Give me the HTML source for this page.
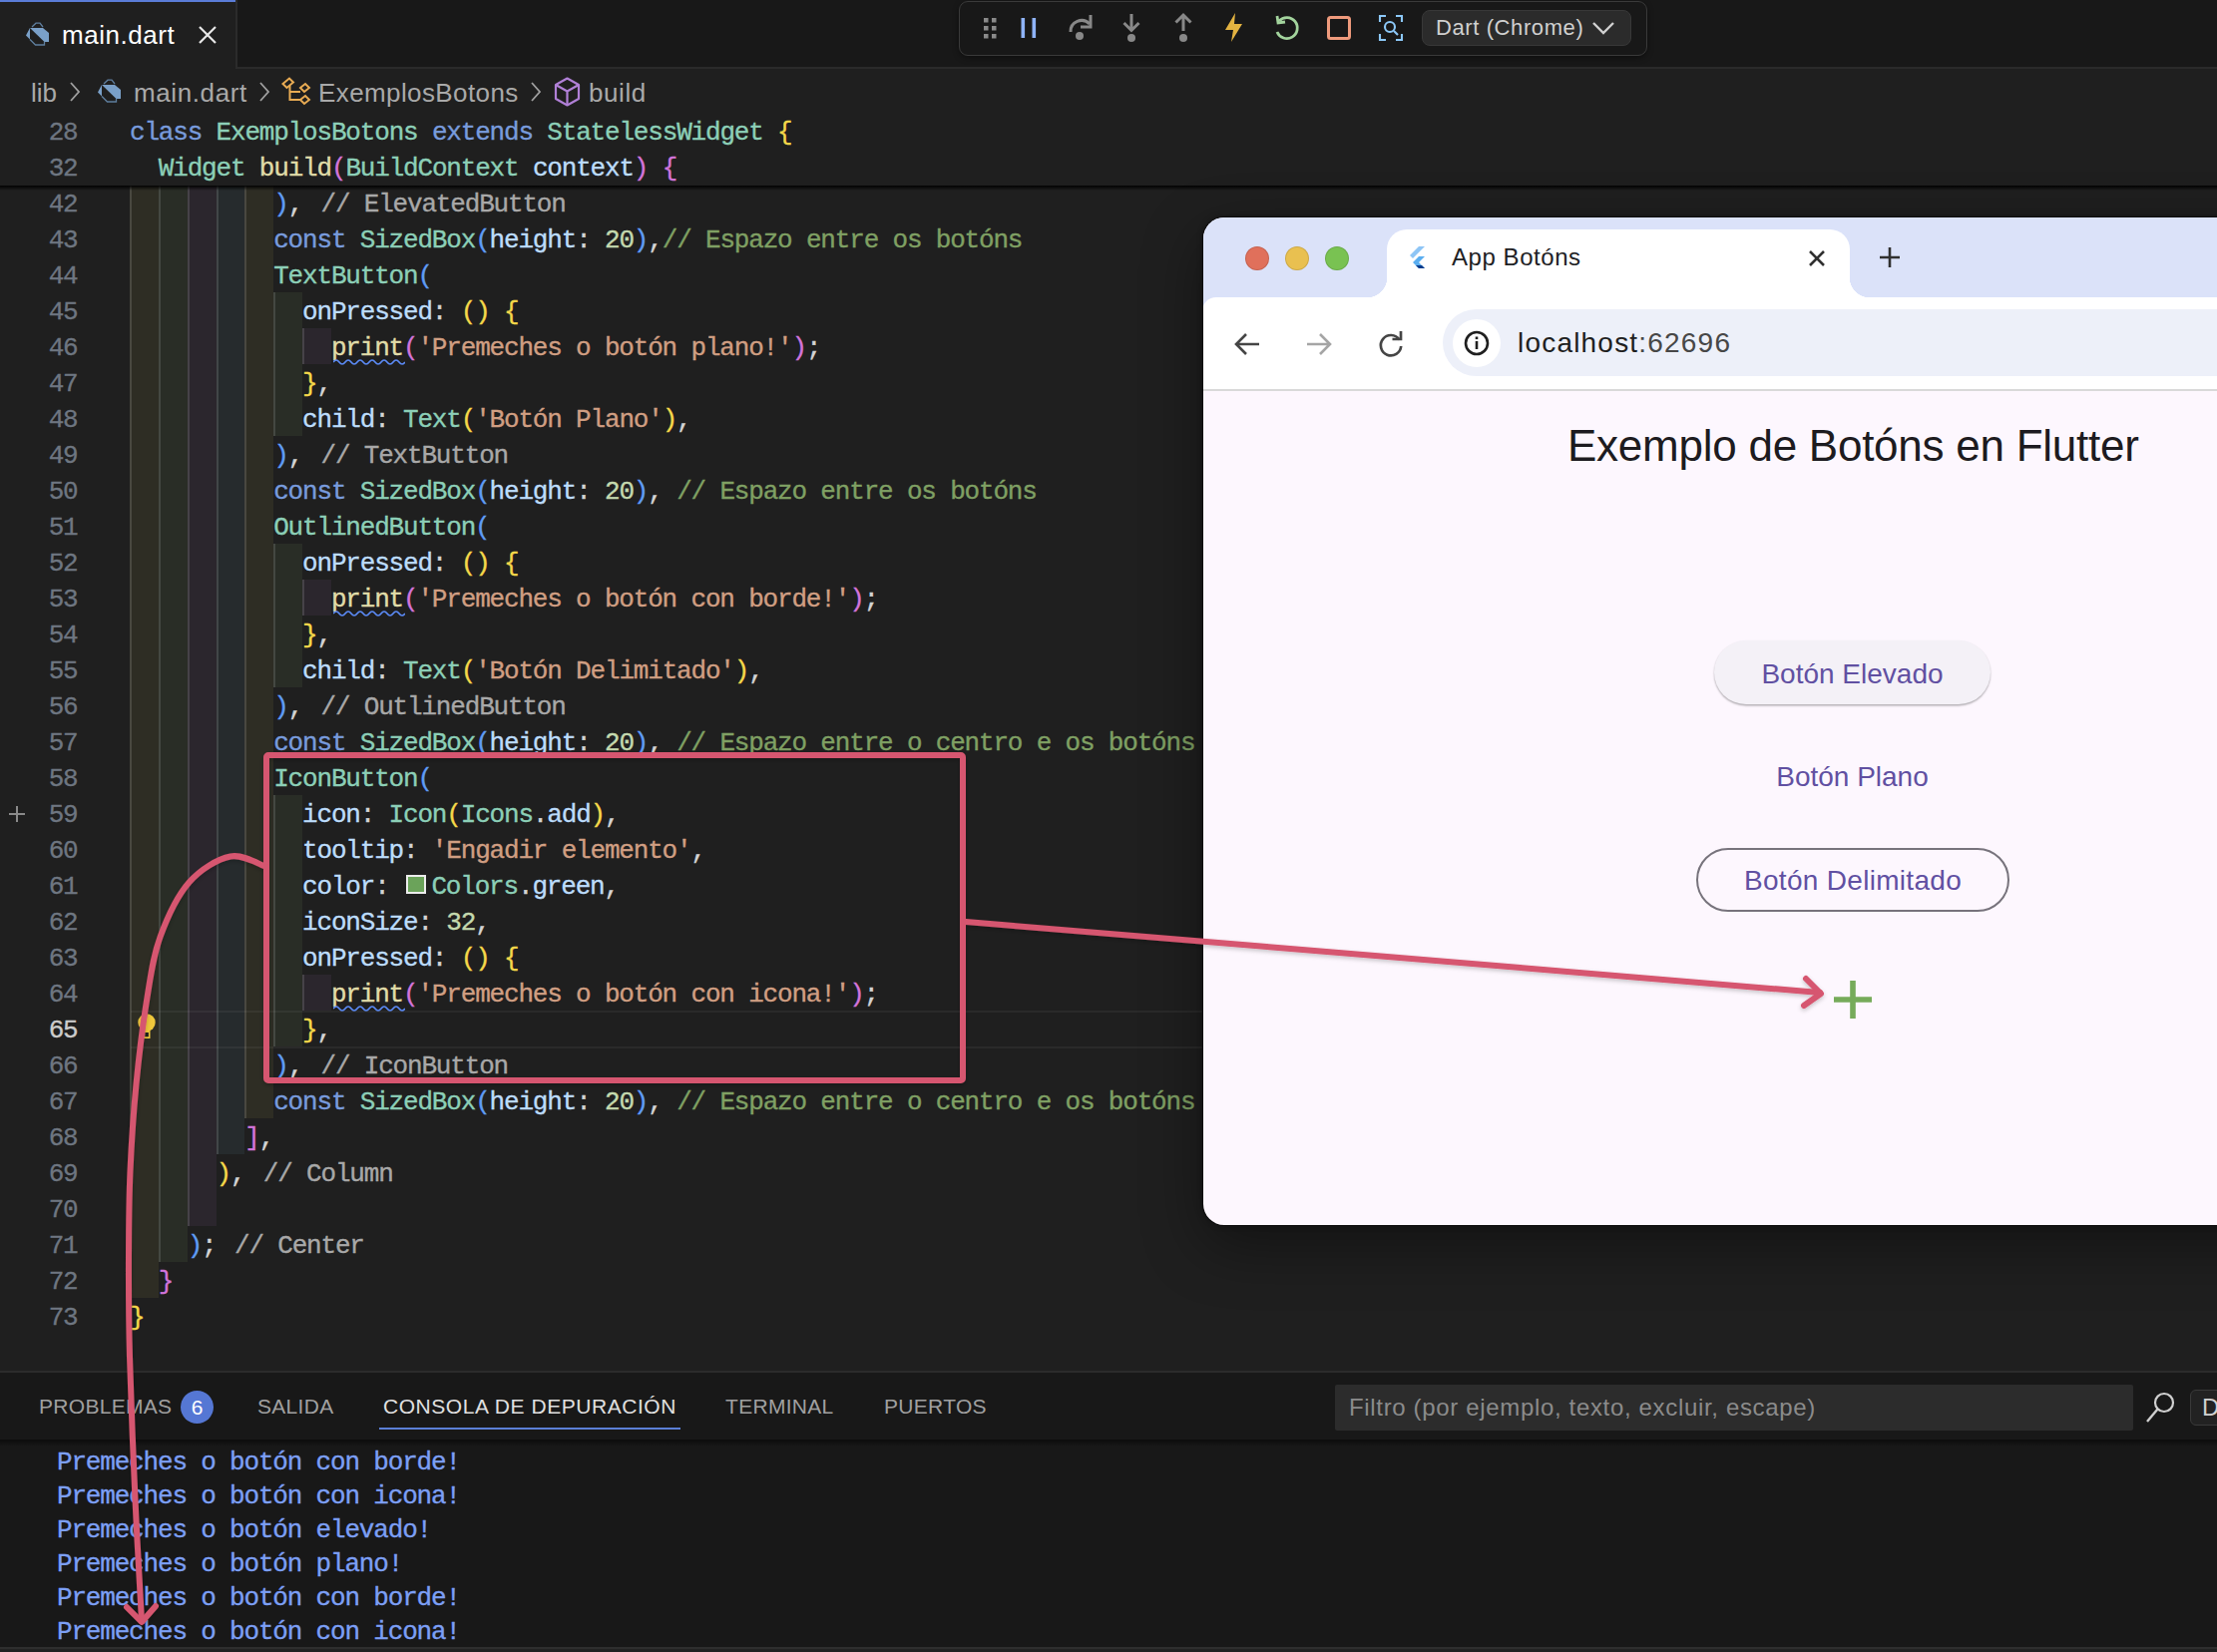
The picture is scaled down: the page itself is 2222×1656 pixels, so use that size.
<!DOCTYPE html>
<html><head><meta charset="utf-8">
<style>
html,body{margin:0;padding:0}
body{width:2222px;height:1656px;overflow:hidden;background:#1f1f1f;position:relative;font-family:"Liberation Sans",sans-serif}
.abs{position:absolute}
.bd{position:absolute;height:36px}
.gd{position:absolute;width:2px;height:36px;background:rgba(255,255,255,0.13)}
.ln{position:absolute;-webkit-text-stroke:0.3px currentColor;left:0;width:77.5px;text-align:right;height:36px;line-height:36px;margin-top:2px;font-family:"Liberation Mono",monospace;font-size:26px;letter-spacing:-1.18px;color:#6e7681}
.cd{position:absolute;-webkit-text-stroke:0.35px currentColor;height:36px;line-height:36px;margin-top:2px;font-family:"Liberation Mono",monospace;font-size:26px;letter-spacing:-1.18px;white-space:pre;color:#d4d4d4}
.kw{color:#789bdc}.ty{color:#8ccfb7}.fn{color:#e0dca8}.va{color:#bcdcfb}.pu{color:#d4d4d4}
.st{color:#d09e82}.cm{color:#7fa063}.nu{color:#c4d9ae}.gb{color:#f5d84a}.ob{color:#d274da}.bb{color:#5f9cf5}.cl{color:#a8a8a8;margin-left:4px}
.sq{}
.sw{display:inline-block;width:28.4px;height:36px;position:relative;vertical-align:top;letter-spacing:0}
.sw::after{content:"";position:absolute;left:3px;top:6px;width:16px;height:15px;background:#6ba35a;border:2px solid #ececec}
.cons{position:absolute;-webkit-text-stroke:0.35px currentColor;left:57px;height:34px;line-height:34px;margin-top:0px;font-family:"Liberation Mono",monospace;font-size:26px;letter-spacing:-1.18px;white-space:pre;color:#7c9ff5}
.ptab{position:absolute;top:1393px;height:34px;line-height:34px;font-size:21px;color:#a0a0a0;letter-spacing:0.3px}
</style></head><body>

<!-- ============ TAB BAR ============ -->
<div class="abs" style="left:0;top:0;width:2222px;height:67px;background:#181818;border-bottom:2px solid #2a2a2a"></div>
<div class="abs" style="left:0;top:0;width:236px;height:69px;background:#1f1f1f;border-right:2px solid #2b2b2b"></div>
<div class="abs" style="left:0;top:0;width:236px;height:2px;background:#5a7cd8"></div>
<svg class="abs" style="left:20px;top:18px" width="36" height="32" viewBox="0 0 36 32">
  <path d="M10 10 L23 10 L29 15 L29 24 L24.5 24 Z" fill="#7aa0c8"/><path d="M10 10 L6 17.5 L10 21.5 Z" fill="#7aa0c8"/>
  <path d="M10 21.5 L15.5 27 L24.5 27 L24.5 24 M12 9 L16 5.2 L20 5.2 L23 9" fill="none" stroke="#5f7f9f" stroke-width="1.3"/>
</svg>
<div class="abs" style="left:62px;top:17px;font-size:26px;line-height:36px;letter-spacing:0.55px;color:#ffffff">main.dart</div>
<svg class="abs" style="left:197px;top:24px" width="22" height="22" viewBox="0 0 22 22"><path d="M3 3 L19 19 M19 3 L3 19" stroke="#e8e8e8" stroke-width="2.2"/></svg>

<!-- debug toolbar -->
<div class="abs" style="left:961px;top:1px;width:690px;height:55px;box-sizing:border-box;background:#181818;border:1.5px solid #3a3a3a;border-radius:9px;box-shadow:0 2px 6px rgba(0,0,0,0.4)"></div>
<svg class="abs" style="left:980px;top:10px" width="660" height="40" viewBox="0 0 660 40">
  <g fill="#8a8a8a">
    <rect x="6" y="8" width="4.5" height="4.5"/><rect x="14" y="8" width="4.5" height="4.5"/>
    <rect x="6" y="16" width="4.5" height="4.5"/><rect x="14" y="16" width="4.5" height="4.5"/>
    <rect x="6" y="24" width="4.5" height="4.5"/><rect x="14" y="24" width="4.5" height="4.5"/>
  </g>
  <rect x="43.5" y="8" width="3.6" height="20" fill="#8fb3f7"/><rect x="54.5" y="8" width="3.6" height="20" fill="#8fb3f7"/>
  <!-- step over -->
  <path d="M93 22 A11 11 0 0 1 112 14" fill="none" stroke="#888" stroke-width="3"/>
  <path d="M113 5 L113 17 L103 17" fill="none" stroke="#888" stroke-width="3"/>
  <circle cx="102" cy="26" r="4" fill="#888"/>
  <!-- step into -->
  <path d="M154 4 L154 20 M146.5 13 L154 20.5 L161.5 13" fill="none" stroke="#888" stroke-width="3"/>
  <circle cx="154" cy="28" r="4" fill="#888"/>
  <!-- step out -->
  <path d="M206 21 L206 5 M198.5 12.5 L206 5 L213.5 12.5" fill="none" stroke="#888" stroke-width="3"/>
  <circle cx="206" cy="28" r="4" fill="#888"/>
  <!-- lightning -->
  <path d="M258 3 L248 20 L256 20 L254 32 L265 14 L257 14 Z" fill="#e3b341"/>
  <!-- restart -->
  <path d="M302 11 A10.5 10.5 0 1 1 300 22" fill="none" stroke="#a3d49d" stroke-width="2.8"/>
  <path d="M300 6 L301 13 L308 12" fill="none" stroke="#a3d49d" stroke-width="2.8"/>
  <!-- stop -->
  <rect x="351.5" y="7.5" width="21" height="21" rx="2" fill="none" stroke="#ee9a7c" stroke-width="3"/>
  <!-- inspect -->
  <g fill="none" stroke="#8cc8f8" stroke-width="2.1">
    <path d="M403 12 L403 6 L409 6 M419 6 L425 6 L425 12 M425 24 L425 30 L419 30 M409 30 L403 30 L403 24"/>
    <circle cx="413" cy="17" r="5"/><path d="M417 21 L421 25"/>
  </g>
</svg>
<div class="abs" style="left:1425px;top:10px;width:210px;height:36px;box-sizing:border-box;background:#2b2b2b;border:1.5px solid #383838;border-radius:8px"></div>
<div class="abs" style="left:1439px;top:11px;font-size:22px;line-height:34px;letter-spacing:0.6px;color:#d0d0d0">Dart (Chrome)</div>
<svg class="abs" style="left:1594px;top:18px" width="26" height="20" viewBox="0 0 26 20"><path d="M3 5 L13 15 L23 5" fill="none" stroke="#d0d0d0" stroke-width="2.4"/></svg>

<!-- ============ BREADCRUMBS ============ -->
<div class="abs" style="left:31px;top:75px;font-size:26px;line-height:36px;color:#a9a9a9">lib</div>
<svg class="abs" style="left:68px;top:82px" width="14" height="20" viewBox="0 0 14 20"><path d="M3 1 L11 10 L3 19" fill="none" stroke="#a0a0a0" stroke-width="1.8"/></svg>
<svg class="abs" style="left:92px;top:75px" width="36" height="32" viewBox="0 0 36 32">
  <path d="M10 10 L23 10 L29 15 L29 24 L24.5 24 Z" fill="#7aa0c8"/><path d="M10 10 L6 17.5 L10 21.5 Z" fill="#7aa0c8"/>
  <path d="M10 21.5 L15.5 27 L24.5 27 L24.5 24 M12 9 L16 5.2 L20 5.2 L23 9" fill="none" stroke="#5f7f9f" stroke-width="1.3"/>
</svg>
<div class="abs" style="left:134px;top:75px;font-size:26px;line-height:36px;letter-spacing:0.6px;color:#a9a9a9">main.dart</div>
<svg class="abs" style="left:258px;top:82px" width="14" height="20" viewBox="0 0 14 20"><path d="M3 1 L11 10 L3 19" fill="none" stroke="#a0a0a0" stroke-width="1.8"/></svg>
<svg class="abs" style="left:282px;top:77px" width="30" height="30" viewBox="0 0 30 30">
  <g fill="none" stroke="#e8ab53" stroke-width="2">
    <path d="M1.5 7 L8 1.5 L12 5.5 L5.5 11 Z"/><path d="M19 11 L24 7 L28 11 L23 15 Z"/><path d="M19 23 L24 19 L28 23 L23 27 Z"/>
    <path d="M8.5 9 L8.5 23 L19 23 M8.5 15 L19 15"/>
  </g>
</svg>
<div class="abs" style="left:319px;top:75px;font-size:26px;line-height:36px;letter-spacing:0.4px;color:#a9a9a9">ExemplosBotons</div>
<svg class="abs" style="left:530px;top:82px" width="14" height="20" viewBox="0 0 14 20"><path d="M3 1 L11 10 L3 19" fill="none" stroke="#a0a0a0" stroke-width="1.8"/></svg>
<svg class="abs" style="left:555px;top:77px" width="27" height="30" viewBox="0 0 27 30">
  <g fill="none" stroke="#b180d7" stroke-width="2.2" stroke-linejoin="round">
    <path d="M13.5 1.5 L25 8 L25 22 L13.5 28.5 L2 22 L2 8 Z"/><path d="M2 8 L13.5 14.5 L25 8 M13.5 14.5 L13.5 28.5"/>
  </g>
</svg>
<div class="abs" style="left:590px;top:75px;font-size:26px;line-height:36px;letter-spacing:0.6px;color:#a9a9a9">build</div>

<!-- ============ CODE ============ -->
<div class="bd" style="left:130.00px;top:185px;width:28.84px;background:#2e2d24"></div>
<div class="gd" style="left:130.00px;top:185px"></div>
<div class="bd" style="left:158.84px;top:185px;width:28.84px;background:#292d26"></div>
<div class="gd" style="left:158.84px;top:185px"></div>
<div class="bd" style="left:187.68px;top:185px;width:28.84px;background:#2b262d"></div>
<div class="gd" style="left:187.68px;top:185px"></div>
<div class="bd" style="left:216.52px;top:185px;width:28.84px;background:#262b2d"></div>
<div class="gd" style="left:216.52px;top:185px"></div>
<div class="bd" style="left:245.36px;top:185px;width:28.84px;background:#2e2d24"></div>
<div class="gd" style="left:245.36px;top:185px"></div>
<div class="bd" style="left:130.00px;top:221px;width:28.84px;background:#2e2d24"></div>
<div class="gd" style="left:130.00px;top:221px"></div>
<div class="bd" style="left:158.84px;top:221px;width:28.84px;background:#292d26"></div>
<div class="gd" style="left:158.84px;top:221px"></div>
<div class="bd" style="left:187.68px;top:221px;width:28.84px;background:#2b262d"></div>
<div class="gd" style="left:187.68px;top:221px"></div>
<div class="bd" style="left:216.52px;top:221px;width:28.84px;background:#262b2d"></div>
<div class="gd" style="left:216.52px;top:221px"></div>
<div class="bd" style="left:245.36px;top:221px;width:28.84px;background:#2e2d24"></div>
<div class="gd" style="left:245.36px;top:221px"></div>
<div class="bd" style="left:130.00px;top:257px;width:28.84px;background:#2e2d24"></div>
<div class="gd" style="left:130.00px;top:257px"></div>
<div class="bd" style="left:158.84px;top:257px;width:28.84px;background:#292d26"></div>
<div class="gd" style="left:158.84px;top:257px"></div>
<div class="bd" style="left:187.68px;top:257px;width:28.84px;background:#2b262d"></div>
<div class="gd" style="left:187.68px;top:257px"></div>
<div class="bd" style="left:216.52px;top:257px;width:28.84px;background:#262b2d"></div>
<div class="gd" style="left:216.52px;top:257px"></div>
<div class="bd" style="left:245.36px;top:257px;width:28.84px;background:#2e2d24"></div>
<div class="gd" style="left:245.36px;top:257px"></div>
<div class="bd" style="left:130.00px;top:293px;width:28.84px;background:#2e2d24"></div>
<div class="gd" style="left:130.00px;top:293px"></div>
<div class="bd" style="left:158.84px;top:293px;width:28.84px;background:#292d26"></div>
<div class="gd" style="left:158.84px;top:293px"></div>
<div class="bd" style="left:187.68px;top:293px;width:28.84px;background:#2b262d"></div>
<div class="gd" style="left:187.68px;top:293px"></div>
<div class="bd" style="left:216.52px;top:293px;width:28.84px;background:#262b2d"></div>
<div class="gd" style="left:216.52px;top:293px"></div>
<div class="bd" style="left:245.36px;top:293px;width:28.84px;background:#2e2d24"></div>
<div class="gd" style="left:245.36px;top:293px"></div>
<div class="bd" style="left:274.20px;top:293px;width:28.84px;background:#292d26"></div>
<div class="gd" style="left:274.20px;top:293px"></div>
<div class="bd" style="left:130.00px;top:329px;width:28.84px;background:#2e2d24"></div>
<div class="gd" style="left:130.00px;top:329px"></div>
<div class="bd" style="left:158.84px;top:329px;width:28.84px;background:#292d26"></div>
<div class="gd" style="left:158.84px;top:329px"></div>
<div class="bd" style="left:187.68px;top:329px;width:28.84px;background:#2b262d"></div>
<div class="gd" style="left:187.68px;top:329px"></div>
<div class="bd" style="left:216.52px;top:329px;width:28.84px;background:#262b2d"></div>
<div class="gd" style="left:216.52px;top:329px"></div>
<div class="bd" style="left:245.36px;top:329px;width:28.84px;background:#2e2d24"></div>
<div class="gd" style="left:245.36px;top:329px"></div>
<div class="bd" style="left:274.20px;top:329px;width:28.84px;background:#292d26"></div>
<div class="gd" style="left:274.20px;top:329px"></div>
<div class="bd" style="left:303.04px;top:329px;width:28.84px;background:#2b262d"></div>
<div class="gd" style="left:303.04px;top:329px"></div>
<div class="bd" style="left:130.00px;top:365px;width:28.84px;background:#2e2d24"></div>
<div class="gd" style="left:130.00px;top:365px"></div>
<div class="bd" style="left:158.84px;top:365px;width:28.84px;background:#292d26"></div>
<div class="gd" style="left:158.84px;top:365px"></div>
<div class="bd" style="left:187.68px;top:365px;width:28.84px;background:#2b262d"></div>
<div class="gd" style="left:187.68px;top:365px"></div>
<div class="bd" style="left:216.52px;top:365px;width:28.84px;background:#262b2d"></div>
<div class="gd" style="left:216.52px;top:365px"></div>
<div class="bd" style="left:245.36px;top:365px;width:28.84px;background:#2e2d24"></div>
<div class="gd" style="left:245.36px;top:365px"></div>
<div class="bd" style="left:274.20px;top:365px;width:28.84px;background:#292d26"></div>
<div class="gd" style="left:274.20px;top:365px"></div>
<div class="bd" style="left:130.00px;top:401px;width:28.84px;background:#2e2d24"></div>
<div class="gd" style="left:130.00px;top:401px"></div>
<div class="bd" style="left:158.84px;top:401px;width:28.84px;background:#292d26"></div>
<div class="gd" style="left:158.84px;top:401px"></div>
<div class="bd" style="left:187.68px;top:401px;width:28.84px;background:#2b262d"></div>
<div class="gd" style="left:187.68px;top:401px"></div>
<div class="bd" style="left:216.52px;top:401px;width:28.84px;background:#262b2d"></div>
<div class="gd" style="left:216.52px;top:401px"></div>
<div class="bd" style="left:245.36px;top:401px;width:28.84px;background:#2e2d24"></div>
<div class="gd" style="left:245.36px;top:401px"></div>
<div class="bd" style="left:274.20px;top:401px;width:28.84px;background:#292d26"></div>
<div class="gd" style="left:274.20px;top:401px"></div>
<div class="bd" style="left:130.00px;top:437px;width:28.84px;background:#2e2d24"></div>
<div class="gd" style="left:130.00px;top:437px"></div>
<div class="bd" style="left:158.84px;top:437px;width:28.84px;background:#292d26"></div>
<div class="gd" style="left:158.84px;top:437px"></div>
<div class="bd" style="left:187.68px;top:437px;width:28.84px;background:#2b262d"></div>
<div class="gd" style="left:187.68px;top:437px"></div>
<div class="bd" style="left:216.52px;top:437px;width:28.84px;background:#262b2d"></div>
<div class="gd" style="left:216.52px;top:437px"></div>
<div class="bd" style="left:245.36px;top:437px;width:28.84px;background:#2e2d24"></div>
<div class="gd" style="left:245.36px;top:437px"></div>
<div class="bd" style="left:130.00px;top:473px;width:28.84px;background:#2e2d24"></div>
<div class="gd" style="left:130.00px;top:473px"></div>
<div class="bd" style="left:158.84px;top:473px;width:28.84px;background:#292d26"></div>
<div class="gd" style="left:158.84px;top:473px"></div>
<div class="bd" style="left:187.68px;top:473px;width:28.84px;background:#2b262d"></div>
<div class="gd" style="left:187.68px;top:473px"></div>
<div class="bd" style="left:216.52px;top:473px;width:28.84px;background:#262b2d"></div>
<div class="gd" style="left:216.52px;top:473px"></div>
<div class="bd" style="left:245.36px;top:473px;width:28.84px;background:#2e2d24"></div>
<div class="gd" style="left:245.36px;top:473px"></div>
<div class="bd" style="left:130.00px;top:509px;width:28.84px;background:#2e2d24"></div>
<div class="gd" style="left:130.00px;top:509px"></div>
<div class="bd" style="left:158.84px;top:509px;width:28.84px;background:#292d26"></div>
<div class="gd" style="left:158.84px;top:509px"></div>
<div class="bd" style="left:187.68px;top:509px;width:28.84px;background:#2b262d"></div>
<div class="gd" style="left:187.68px;top:509px"></div>
<div class="bd" style="left:216.52px;top:509px;width:28.84px;background:#262b2d"></div>
<div class="gd" style="left:216.52px;top:509px"></div>
<div class="bd" style="left:245.36px;top:509px;width:28.84px;background:#2e2d24"></div>
<div class="gd" style="left:245.36px;top:509px"></div>
<div class="bd" style="left:130.00px;top:545px;width:28.84px;background:#2e2d24"></div>
<div class="gd" style="left:130.00px;top:545px"></div>
<div class="bd" style="left:158.84px;top:545px;width:28.84px;background:#292d26"></div>
<div class="gd" style="left:158.84px;top:545px"></div>
<div class="bd" style="left:187.68px;top:545px;width:28.84px;background:#2b262d"></div>
<div class="gd" style="left:187.68px;top:545px"></div>
<div class="bd" style="left:216.52px;top:545px;width:28.84px;background:#262b2d"></div>
<div class="gd" style="left:216.52px;top:545px"></div>
<div class="bd" style="left:245.36px;top:545px;width:28.84px;background:#2e2d24"></div>
<div class="gd" style="left:245.36px;top:545px"></div>
<div class="bd" style="left:274.20px;top:545px;width:28.84px;background:#292d26"></div>
<div class="gd" style="left:274.20px;top:545px"></div>
<div class="bd" style="left:130.00px;top:581px;width:28.84px;background:#2e2d24"></div>
<div class="gd" style="left:130.00px;top:581px"></div>
<div class="bd" style="left:158.84px;top:581px;width:28.84px;background:#292d26"></div>
<div class="gd" style="left:158.84px;top:581px"></div>
<div class="bd" style="left:187.68px;top:581px;width:28.84px;background:#2b262d"></div>
<div class="gd" style="left:187.68px;top:581px"></div>
<div class="bd" style="left:216.52px;top:581px;width:28.84px;background:#262b2d"></div>
<div class="gd" style="left:216.52px;top:581px"></div>
<div class="bd" style="left:245.36px;top:581px;width:28.84px;background:#2e2d24"></div>
<div class="gd" style="left:245.36px;top:581px"></div>
<div class="bd" style="left:274.20px;top:581px;width:28.84px;background:#292d26"></div>
<div class="gd" style="left:274.20px;top:581px"></div>
<div class="bd" style="left:303.04px;top:581px;width:28.84px;background:#2b262d"></div>
<div class="gd" style="left:303.04px;top:581px"></div>
<div class="bd" style="left:130.00px;top:617px;width:28.84px;background:#2e2d24"></div>
<div class="gd" style="left:130.00px;top:617px"></div>
<div class="bd" style="left:158.84px;top:617px;width:28.84px;background:#292d26"></div>
<div class="gd" style="left:158.84px;top:617px"></div>
<div class="bd" style="left:187.68px;top:617px;width:28.84px;background:#2b262d"></div>
<div class="gd" style="left:187.68px;top:617px"></div>
<div class="bd" style="left:216.52px;top:617px;width:28.84px;background:#262b2d"></div>
<div class="gd" style="left:216.52px;top:617px"></div>
<div class="bd" style="left:245.36px;top:617px;width:28.84px;background:#2e2d24"></div>
<div class="gd" style="left:245.36px;top:617px"></div>
<div class="bd" style="left:274.20px;top:617px;width:28.84px;background:#292d26"></div>
<div class="gd" style="left:274.20px;top:617px"></div>
<div class="bd" style="left:130.00px;top:653px;width:28.84px;background:#2e2d24"></div>
<div class="gd" style="left:130.00px;top:653px"></div>
<div class="bd" style="left:158.84px;top:653px;width:28.84px;background:#292d26"></div>
<div class="gd" style="left:158.84px;top:653px"></div>
<div class="bd" style="left:187.68px;top:653px;width:28.84px;background:#2b262d"></div>
<div class="gd" style="left:187.68px;top:653px"></div>
<div class="bd" style="left:216.52px;top:653px;width:28.84px;background:#262b2d"></div>
<div class="gd" style="left:216.52px;top:653px"></div>
<div class="bd" style="left:245.36px;top:653px;width:28.84px;background:#2e2d24"></div>
<div class="gd" style="left:245.36px;top:653px"></div>
<div class="bd" style="left:274.20px;top:653px;width:28.84px;background:#292d26"></div>
<div class="gd" style="left:274.20px;top:653px"></div>
<div class="bd" style="left:130.00px;top:689px;width:28.84px;background:#2e2d24"></div>
<div class="gd" style="left:130.00px;top:689px"></div>
<div class="bd" style="left:158.84px;top:689px;width:28.84px;background:#292d26"></div>
<div class="gd" style="left:158.84px;top:689px"></div>
<div class="bd" style="left:187.68px;top:689px;width:28.84px;background:#2b262d"></div>
<div class="gd" style="left:187.68px;top:689px"></div>
<div class="bd" style="left:216.52px;top:689px;width:28.84px;background:#262b2d"></div>
<div class="gd" style="left:216.52px;top:689px"></div>
<div class="bd" style="left:245.36px;top:689px;width:28.84px;background:#2e2d24"></div>
<div class="gd" style="left:245.36px;top:689px"></div>
<div class="bd" style="left:130.00px;top:725px;width:28.84px;background:#2e2d24"></div>
<div class="gd" style="left:130.00px;top:725px"></div>
<div class="bd" style="left:158.84px;top:725px;width:28.84px;background:#292d26"></div>
<div class="gd" style="left:158.84px;top:725px"></div>
<div class="bd" style="left:187.68px;top:725px;width:28.84px;background:#2b262d"></div>
<div class="gd" style="left:187.68px;top:725px"></div>
<div class="bd" style="left:216.52px;top:725px;width:28.84px;background:#262b2d"></div>
<div class="gd" style="left:216.52px;top:725px"></div>
<div class="bd" style="left:245.36px;top:725px;width:28.84px;background:#2e2d24"></div>
<div class="gd" style="left:245.36px;top:725px"></div>
<div class="bd" style="left:130.00px;top:761px;width:28.84px;background:#2e2d24"></div>
<div class="gd" style="left:130.00px;top:761px"></div>
<div class="bd" style="left:158.84px;top:761px;width:28.84px;background:#292d26"></div>
<div class="gd" style="left:158.84px;top:761px"></div>
<div class="bd" style="left:187.68px;top:761px;width:28.84px;background:#2b262d"></div>
<div class="gd" style="left:187.68px;top:761px"></div>
<div class="bd" style="left:216.52px;top:761px;width:28.84px;background:#262b2d"></div>
<div class="gd" style="left:216.52px;top:761px"></div>
<div class="bd" style="left:245.36px;top:761px;width:28.84px;background:#2e2d24"></div>
<div class="gd" style="left:245.36px;top:761px"></div>
<div class="bd" style="left:130.00px;top:797px;width:28.84px;background:#2e2d24"></div>
<div class="gd" style="left:130.00px;top:797px"></div>
<div class="bd" style="left:158.84px;top:797px;width:28.84px;background:#292d26"></div>
<div class="gd" style="left:158.84px;top:797px"></div>
<div class="bd" style="left:187.68px;top:797px;width:28.84px;background:#2b262d"></div>
<div class="gd" style="left:187.68px;top:797px"></div>
<div class="bd" style="left:216.52px;top:797px;width:28.84px;background:#262b2d"></div>
<div class="gd" style="left:216.52px;top:797px"></div>
<div class="bd" style="left:245.36px;top:797px;width:28.84px;background:#2e2d24"></div>
<div class="gd" style="left:245.36px;top:797px"></div>
<div class="bd" style="left:274.20px;top:797px;width:28.84px;background:#292d26"></div>
<div class="gd" style="left:274.20px;top:797px"></div>
<div class="bd" style="left:130.00px;top:833px;width:28.84px;background:#2e2d24"></div>
<div class="gd" style="left:130.00px;top:833px"></div>
<div class="bd" style="left:158.84px;top:833px;width:28.84px;background:#292d26"></div>
<div class="gd" style="left:158.84px;top:833px"></div>
<div class="bd" style="left:187.68px;top:833px;width:28.84px;background:#2b262d"></div>
<div class="gd" style="left:187.68px;top:833px"></div>
<div class="bd" style="left:216.52px;top:833px;width:28.84px;background:#262b2d"></div>
<div class="gd" style="left:216.52px;top:833px"></div>
<div class="bd" style="left:245.36px;top:833px;width:28.84px;background:#2e2d24"></div>
<div class="gd" style="left:245.36px;top:833px"></div>
<div class="bd" style="left:274.20px;top:833px;width:28.84px;background:#292d26"></div>
<div class="gd" style="left:274.20px;top:833px"></div>
<div class="bd" style="left:130.00px;top:869px;width:28.84px;background:#2e2d24"></div>
<div class="gd" style="left:130.00px;top:869px"></div>
<div class="bd" style="left:158.84px;top:869px;width:28.84px;background:#292d26"></div>
<div class="gd" style="left:158.84px;top:869px"></div>
<div class="bd" style="left:187.68px;top:869px;width:28.84px;background:#2b262d"></div>
<div class="gd" style="left:187.68px;top:869px"></div>
<div class="bd" style="left:216.52px;top:869px;width:28.84px;background:#262b2d"></div>
<div class="gd" style="left:216.52px;top:869px"></div>
<div class="bd" style="left:245.36px;top:869px;width:28.84px;background:#2e2d24"></div>
<div class="gd" style="left:245.36px;top:869px"></div>
<div class="bd" style="left:274.20px;top:869px;width:28.84px;background:#292d26"></div>
<div class="gd" style="left:274.20px;top:869px"></div>
<div class="bd" style="left:130.00px;top:905px;width:28.84px;background:#2e2d24"></div>
<div class="gd" style="left:130.00px;top:905px"></div>
<div class="bd" style="left:158.84px;top:905px;width:28.84px;background:#292d26"></div>
<div class="gd" style="left:158.84px;top:905px"></div>
<div class="bd" style="left:187.68px;top:905px;width:28.84px;background:#2b262d"></div>
<div class="gd" style="left:187.68px;top:905px"></div>
<div class="bd" style="left:216.52px;top:905px;width:28.84px;background:#262b2d"></div>
<div class="gd" style="left:216.52px;top:905px"></div>
<div class="bd" style="left:245.36px;top:905px;width:28.84px;background:#2e2d24"></div>
<div class="gd" style="left:245.36px;top:905px"></div>
<div class="bd" style="left:274.20px;top:905px;width:28.84px;background:#292d26"></div>
<div class="gd" style="left:274.20px;top:905px"></div>
<div class="bd" style="left:130.00px;top:941px;width:28.84px;background:#2e2d24"></div>
<div class="gd" style="left:130.00px;top:941px"></div>
<div class="bd" style="left:158.84px;top:941px;width:28.84px;background:#292d26"></div>
<div class="gd" style="left:158.84px;top:941px"></div>
<div class="bd" style="left:187.68px;top:941px;width:28.84px;background:#2b262d"></div>
<div class="gd" style="left:187.68px;top:941px"></div>
<div class="bd" style="left:216.52px;top:941px;width:28.84px;background:#262b2d"></div>
<div class="gd" style="left:216.52px;top:941px"></div>
<div class="bd" style="left:245.36px;top:941px;width:28.84px;background:#2e2d24"></div>
<div class="gd" style="left:245.36px;top:941px"></div>
<div class="bd" style="left:274.20px;top:941px;width:28.84px;background:#292d26"></div>
<div class="gd" style="left:274.20px;top:941px"></div>
<div class="bd" style="left:130.00px;top:977px;width:28.84px;background:#2e2d24"></div>
<div class="gd" style="left:130.00px;top:977px"></div>
<div class="bd" style="left:158.84px;top:977px;width:28.84px;background:#292d26"></div>
<div class="gd" style="left:158.84px;top:977px"></div>
<div class="bd" style="left:187.68px;top:977px;width:28.84px;background:#2b262d"></div>
<div class="gd" style="left:187.68px;top:977px"></div>
<div class="bd" style="left:216.52px;top:977px;width:28.84px;background:#262b2d"></div>
<div class="gd" style="left:216.52px;top:977px"></div>
<div class="bd" style="left:245.36px;top:977px;width:28.84px;background:#2e2d24"></div>
<div class="gd" style="left:245.36px;top:977px"></div>
<div class="bd" style="left:274.20px;top:977px;width:28.84px;background:#292d26"></div>
<div class="gd" style="left:274.20px;top:977px"></div>
<div class="bd" style="left:303.04px;top:977px;width:28.84px;background:#2b262d"></div>
<div class="gd" style="left:303.04px;top:977px"></div>
<div class="bd" style="left:130.00px;top:1013px;width:28.84px;background:#2e2d24"></div>
<div class="gd" style="left:130.00px;top:1013px"></div>
<div class="bd" style="left:158.84px;top:1013px;width:28.84px;background:#292d26"></div>
<div class="gd" style="left:158.84px;top:1013px"></div>
<div class="bd" style="left:187.68px;top:1013px;width:28.84px;background:#2b262d"></div>
<div class="gd" style="left:187.68px;top:1013px"></div>
<div class="bd" style="left:216.52px;top:1013px;width:28.84px;background:#262b2d"></div>
<div class="gd" style="left:216.52px;top:1013px"></div>
<div class="bd" style="left:245.36px;top:1013px;width:28.84px;background:#2e2d24"></div>
<div class="gd" style="left:245.36px;top:1013px"></div>
<div class="bd" style="left:274.20px;top:1013px;width:28.84px;background:#292d26"></div>
<div class="gd" style="left:274.20px;top:1013px"></div>
<div class="bd" style="left:130.00px;top:1049px;width:28.84px;background:#2e2d24"></div>
<div class="gd" style="left:130.00px;top:1049px"></div>
<div class="bd" style="left:158.84px;top:1049px;width:28.84px;background:#292d26"></div>
<div class="gd" style="left:158.84px;top:1049px"></div>
<div class="bd" style="left:187.68px;top:1049px;width:28.84px;background:#2b262d"></div>
<div class="gd" style="left:187.68px;top:1049px"></div>
<div class="bd" style="left:216.52px;top:1049px;width:28.84px;background:#262b2d"></div>
<div class="gd" style="left:216.52px;top:1049px"></div>
<div class="bd" style="left:245.36px;top:1049px;width:28.84px;background:#2e2d24"></div>
<div class="gd" style="left:245.36px;top:1049px"></div>
<div class="bd" style="left:130.00px;top:1085px;width:28.84px;background:#2e2d24"></div>
<div class="gd" style="left:130.00px;top:1085px"></div>
<div class="bd" style="left:158.84px;top:1085px;width:28.84px;background:#292d26"></div>
<div class="gd" style="left:158.84px;top:1085px"></div>
<div class="bd" style="left:187.68px;top:1085px;width:28.84px;background:#2b262d"></div>
<div class="gd" style="left:187.68px;top:1085px"></div>
<div class="bd" style="left:216.52px;top:1085px;width:28.84px;background:#262b2d"></div>
<div class="gd" style="left:216.52px;top:1085px"></div>
<div class="bd" style="left:245.36px;top:1085px;width:28.84px;background:#2e2d24"></div>
<div class="gd" style="left:245.36px;top:1085px"></div>
<div class="bd" style="left:130.00px;top:1121px;width:28.84px;background:#2e2d24"></div>
<div class="gd" style="left:130.00px;top:1121px"></div>
<div class="bd" style="left:158.84px;top:1121px;width:28.84px;background:#292d26"></div>
<div class="gd" style="left:158.84px;top:1121px"></div>
<div class="bd" style="left:187.68px;top:1121px;width:28.84px;background:#2b262d"></div>
<div class="gd" style="left:187.68px;top:1121px"></div>
<div class="bd" style="left:216.52px;top:1121px;width:28.84px;background:#262b2d"></div>
<div class="gd" style="left:216.52px;top:1121px"></div>
<div class="bd" style="left:130.00px;top:1157px;width:28.84px;background:#2e2d24"></div>
<div class="gd" style="left:130.00px;top:1157px"></div>
<div class="bd" style="left:158.84px;top:1157px;width:28.84px;background:#292d26"></div>
<div class="gd" style="left:158.84px;top:1157px"></div>
<div class="bd" style="left:187.68px;top:1157px;width:28.84px;background:#2b262d"></div>
<div class="gd" style="left:187.68px;top:1157px"></div>
<div class="bd" style="left:130.00px;top:1193px;width:28.84px;background:#2e2d24"></div>
<div class="gd" style="left:130.00px;top:1193px"></div>
<div class="bd" style="left:158.84px;top:1193px;width:28.84px;background:#292d26"></div>
<div class="gd" style="left:158.84px;top:1193px"></div>
<div class="bd" style="left:187.68px;top:1193px;width:28.84px;background:#2b262d"></div>
<div class="gd" style="left:187.68px;top:1193px"></div>
<div class="bd" style="left:130.00px;top:1229px;width:28.84px;background:#2e2d24"></div>
<div class="gd" style="left:130.00px;top:1229px"></div>
<div class="bd" style="left:158.84px;top:1229px;width:28.84px;background:#292d26"></div>
<div class="gd" style="left:158.84px;top:1229px"></div>
<div class="bd" style="left:130.00px;top:1265px;width:28.84px;background:#2e2d24"></div>
<div class="gd" style="left:130.00px;top:1265px"></div>
<div class="abs" style="left:131px;top:1013px;width:1080px;height:34px;border-top:2px solid rgba(255,255,255,0.05);border-bottom:2px solid rgba(255,255,255,0.05)"></div>
<div class="ln" style="top:185px;color:#6e7681">42</div>
<div class="cd" style="top:185px;left:274.20px"><span class="bb">)</span><span class="pu">, </span><span class="cl">// ElevatedButton</span></div>
<div class="ln" style="top:221px;color:#6e7681">43</div>
<div class="cd" style="top:221px;left:274.20px"><span class="kw">const</span><span class="pu"> </span><span class="ty">SizedBox</span><span class="bb">(</span><span class="va">height</span><span class="pu">: </span><span class="nu">20</span><span class="bb">)</span><span class="pu">,</span><span class="cm">// Espazo entre os botóns</span></div>
<div class="ln" style="top:257px;color:#6e7681">44</div>
<div class="cd" style="top:257px;left:274.20px"><span class="ty">TextButton</span><span class="bb">(</span></div>
<div class="ln" style="top:293px;color:#6e7681">45</div>
<div class="cd" style="top:293px;left:303.04px"><span class="va">onPressed</span><span class="pu">: </span><span class="gb">()</span><span class="pu"> </span><span class="gb">{</span></div>
<div class="ln" style="top:329px;color:#6e7681">46</div>
<div class="cd" style="top:329px;left:331.88px"><span class="fn sq">print</span><span class="ob">(</span><span class="st">&#x27;Premeches o botón plano!&#x27;</span><span class="ob">)</span><span class="pu">;</span></div>
<div class="ln" style="top:365px;color:#6e7681">47</div>
<div class="cd" style="top:365px;left:303.04px"><span class="gb">}</span><span class="pu">,</span></div>
<div class="ln" style="top:401px;color:#6e7681">48</div>
<div class="cd" style="top:401px;left:303.04px"><span class="va">child</span><span class="pu">: </span><span class="ty">Text</span><span class="gb">(</span><span class="st">&#x27;Botón Plano&#x27;</span><span class="gb">)</span><span class="pu">,</span></div>
<div class="ln" style="top:437px;color:#6e7681">49</div>
<div class="cd" style="top:437px;left:274.20px"><span class="bb">)</span><span class="pu">, </span><span class="cl">// TextButton</span></div>
<div class="ln" style="top:473px;color:#6e7681">50</div>
<div class="cd" style="top:473px;left:274.20px"><span class="kw">const</span><span class="pu"> </span><span class="ty">SizedBox</span><span class="bb">(</span><span class="va">height</span><span class="pu">: </span><span class="nu">20</span><span class="bb">)</span><span class="pu">, </span><span class="cm">// Espazo entre os botóns</span></div>
<div class="ln" style="top:509px;color:#6e7681">51</div>
<div class="cd" style="top:509px;left:274.20px"><span class="ty">OutlinedButton</span><span class="bb">(</span></div>
<div class="ln" style="top:545px;color:#6e7681">52</div>
<div class="cd" style="top:545px;left:303.04px"><span class="va">onPressed</span><span class="pu">: </span><span class="gb">()</span><span class="pu"> </span><span class="gb">{</span></div>
<div class="ln" style="top:581px;color:#6e7681">53</div>
<div class="cd" style="top:581px;left:331.88px"><span class="fn sq">print</span><span class="ob">(</span><span class="st">&#x27;Premeches o botón con borde!&#x27;</span><span class="ob">)</span><span class="pu">;</span></div>
<div class="ln" style="top:617px;color:#6e7681">54</div>
<div class="cd" style="top:617px;left:303.04px"><span class="gb">}</span><span class="pu">,</span></div>
<div class="ln" style="top:653px;color:#6e7681">55</div>
<div class="cd" style="top:653px;left:303.04px"><span class="va">child</span><span class="pu">: </span><span class="ty">Text</span><span class="gb">(</span><span class="st">&#x27;Botón Delimitado&#x27;</span><span class="gb">)</span><span class="pu">,</span></div>
<div class="ln" style="top:689px;color:#6e7681">56</div>
<div class="cd" style="top:689px;left:274.20px"><span class="bb">)</span><span class="pu">, </span><span class="cl">// OutlinedButton</span></div>
<div class="ln" style="top:725px;color:#6e7681">57</div>
<div class="cd" style="top:725px;left:274.20px"><span class="kw">const</span><span class="pu"> </span><span class="ty">SizedBox</span><span class="bb">(</span><span class="va">height</span><span class="pu">: </span><span class="nu">20</span><span class="bb">)</span><span class="pu">, </span><span class="cm">// Espazo entre o centro e os botóns</span></div>
<div class="ln" style="top:761px;color:#6e7681">58</div>
<div class="cd" style="top:761px;left:274.20px"><span class="ty">IconButton</span><span class="bb">(</span></div>
<div class="ln" style="top:797px;color:#6e7681">59</div>
<div class="cd" style="top:797px;left:303.04px"><span class="va">icon</span><span class="pu">: </span><span class="ty">Icon</span><span class="gb">(</span><span class="ty">Icons</span><span class="pu">.</span><span class="va">add</span><span class="gb">)</span><span class="pu">,</span></div>
<div class="ln" style="top:833px;color:#6e7681">60</div>
<div class="cd" style="top:833px;left:303.04px"><span class="va">tooltip</span><span class="pu">: </span><span class="st">&#x27;Engadir elemento&#x27;</span><span class="pu">,</span></div>
<div class="ln" style="top:869px;color:#6e7681">61</div>
<div class="cd" style="top:869px;left:303.04px"><span class="va">color</span><span class="pu">: </span><span class="sw"> </span><span class="ty">Colors</span><span class="pu">.</span><span class="va">green</span><span class="pu">,</span></div>
<div class="ln" style="top:905px;color:#6e7681">62</div>
<div class="cd" style="top:905px;left:303.04px"><span class="va">iconSize</span><span class="pu">: </span><span class="nu">32</span><span class="pu">,</span></div>
<div class="ln" style="top:941px;color:#6e7681">63</div>
<div class="cd" style="top:941px;left:303.04px"><span class="va">onPressed</span><span class="pu">: </span><span class="gb">()</span><span class="pu"> </span><span class="gb">{</span></div>
<div class="ln" style="top:977px;color:#6e7681">64</div>
<div class="cd" style="top:977px;left:331.88px"><span class="fn sq">print</span><span class="ob">(</span><span class="st">&#x27;Premeches o botón con icona!&#x27;</span><span class="ob">)</span><span class="pu">;</span></div>
<div class="ln" style="top:1013px;color:#cccccc">65</div>
<div class="cd" style="top:1013px;left:303.04px"><span class="gb">}</span><span class="pu">,</span></div>
<div class="ln" style="top:1049px;color:#6e7681">66</div>
<div class="cd" style="top:1049px;left:274.20px"><span class="bb">)</span><span class="pu">, </span><span class="cl">// IconButton</span></div>
<div class="ln" style="top:1085px;color:#6e7681">67</div>
<div class="cd" style="top:1085px;left:274.20px"><span class="kw">const</span><span class="pu"> </span><span class="ty">SizedBox</span><span class="bb">(</span><span class="va">height</span><span class="pu">: </span><span class="nu">20</span><span class="bb">)</span><span class="pu">, </span><span class="cm">// Espazo entre o centro e os botóns</span></div>
<div class="ln" style="top:1121px;color:#6e7681">68</div>
<div class="cd" style="top:1121px;left:245.36px"><span class="ob">]</span><span class="pu">,</span></div>
<div class="ln" style="top:1157px;color:#6e7681">69</div>
<div class="cd" style="top:1157px;left:216.52px"><span class="gb">)</span><span class="pu">, </span><span class="cl">// Column</span></div>
<div class="ln" style="top:1193px;color:#6e7681">70</div>
<div class="cd" style="top:1193px;left:130.00px"></div>
<div class="ln" style="top:1229px;color:#6e7681">71</div>
<div class="cd" style="top:1229px;left:187.68px"><span class="bb">)</span><span class="pu">; </span><span class="cl">// Center</span></div>
<div class="ln" style="top:1265px;color:#6e7681">72</div>
<div class="cd" style="top:1265px;left:158.84px"><span class="ob">}</span></div>
<div class="ln" style="top:1301px;color:#6e7681">73</div>
<div class="cd" style="top:1301px;left:130.00px"><span class="gb">}</span></div>
<svg class="abs" style="left:333.9px;top:359px" width="72" height="8" viewBox="0 0 72 8"><path d="M0 4 Q3 0 6 4 Q9 8 12 4 Q15 0 18 4 Q21 8 24 4 Q27 0 30 4 Q33 8 36 4 Q39 0 42 4 Q45 8 48 4 Q51 0 54 4 Q57 8 60 4 Q63 0 66 4 Q69 8 72 4" fill="none" stroke="#5b8af5" stroke-width="1.7"/></svg>
<svg class="abs" style="left:333.9px;top:611px" width="72" height="8" viewBox="0 0 72 8"><path d="M0 4 Q3 0 6 4 Q9 8 12 4 Q15 0 18 4 Q21 8 24 4 Q27 0 30 4 Q33 8 36 4 Q39 0 42 4 Q45 8 48 4 Q51 0 54 4 Q57 8 60 4 Q63 0 66 4 Q69 8 72 4" fill="none" stroke="#5b8af5" stroke-width="1.7"/></svg>
<svg class="abs" style="left:333.9px;top:1007px" width="72" height="8" viewBox="0 0 72 8"><path d="M0 4 Q3 0 6 4 Q9 8 12 4 Q15 0 18 4 Q21 8 24 4 Q27 0 30 4 Q33 8 36 4 Q39 0 42 4 Q45 8 48 4 Q51 0 54 4 Q57 8 60 4 Q63 0 66 4 Q69 8 72 4" fill="none" stroke="#5b8af5" stroke-width="1.7"/></svg>

<!-- sticky scroll -->
<div class="abs" style="left:0;top:112px;width:2222px;height:74px;background:#1f1f1f"></div>
<div class="abs" style="left:0;top:186px;width:2222px;height:5px;background:linear-gradient(rgba(0,0,0,0.95),rgba(0,0,0,0))"></div>
<div class="ln" style="top:113px">28</div>
<div class="cd" style="top:113px;left:130.00px"><span class="kw">class</span><span class="pu"> </span><span class="ty">ExemplosBotons</span><span class="pu"> </span><span class="kw">extends</span><span class="pu"> </span><span class="ty">StatelessWidget</span><span class="pu"> </span><span class="gb">{</span></div>
<div class="ln" style="top:149px">32</div>
<div class="cd" style="top:149px;left:158.84px"><span class="ty">Widget</span><span class="pu"> </span><span class="fn">build</span><span class="ob">(</span><span class="ty">BuildContext</span><span class="pu"> </span><span class="va">context</span><span class="ob">)</span><span class="pu"> </span><span class="ob">{</span></div>

<!-- gutter + on 59, lightbulb on 65 -->
<svg class="abs" style="left:5.5px;top:805px" width="22" height="22" viewBox="0 0 22 22"><path d="M11 3 L11 19 M3 11 L19 11" stroke="#8a8a8a" stroke-width="2"/></svg>
<svg class="abs" style="left:137px;top:1015px" width="20" height="28" viewBox="0 0 20 28">
  <circle cx="10" cy="10" r="8.7" fill="#f0c83c"/><rect x="6.5" y="15" width="7" height="11" fill="#f0c83c"/>
  <rect x="8.3" y="20" width="3.6" height="4.3" fill="#1f1f1f"/>
</svg>

<!-- ============ PANEL ============ -->
<div class="abs" style="left:0;top:1374px;width:2222px;height:282px;background:#181818;border-top:2px solid #2b2b2b"></div>
<div class="abs" style="left:0;top:1443px;width:2222px;height:7px;background:linear-gradient(#0c0c0c,#181818)"></div>
<div class="abs" style="left:0;top:1651px;width:2222px;height:5px;background:#222;border-top:2px solid #2e2e2e"></div>
<div class="ptab" style="left:39px">PROBLEMAS</div>
<div class="abs" style="left:181px;top:1394px;width:33px;height:33px;border-radius:50%;background:#5577d4;color:#fff;font-size:21px;line-height:33px;text-align:center">6</div>
<div class="ptab" style="left:258px">SALIDA</div>
<div class="ptab" style="left:384px;color:#e0e0e0;letter-spacing:0.55px">CONSOLA DE DEPURACIÓN</div>
<div class="abs" style="left:380px;top:1431px;width:302px;height:2px;background:#5b7fd6"></div>
<div class="ptab" style="left:727px">TERMINAL</div>
<div class="ptab" style="left:886px">PUERTOS</div>
<div class="abs" style="left:1338px;top:1388px;width:800px;height:46px;background:#2c2c2c;border-radius:2px"></div>
<div class="abs" style="left:1352px;top:1394px;font-size:24px;line-height:34px;letter-spacing:0.66px;color:#8b8b8b">Filtro (por ejemplo, texto, excluir, escape)</div>
<svg class="abs" style="left:2148px;top:1393px" width="36" height="36" viewBox="0 0 36 36"><circle cx="21" cy="13" r="9" fill="none" stroke="#d0d0d0" stroke-width="2.2"/><path d="M14.5 19.5 L4 32" stroke="#d0d0d0" stroke-width="2.4"/></svg>
<div class="abs" style="left:2195px;top:1393px;width:40px;height:36px;box-sizing:border-box;border:1.5px solid #3a3a3a;border-radius:6px;background:#222"></div>
<div class="abs" style="left:2207px;top:1394px;font-size:24px;line-height:34px;color:#d0d0d0">D</div>
<div class="cons" style="top:1449px">Premeches o botón con borde!</div>
<div class="cons" style="top:1483px">Premeches o botón con icona!</div>
<div class="cons" style="top:1517px">Premeches o botón elevado!</div>
<div class="cons" style="top:1551px">Premeches o botón plano!</div>
<div class="cons" style="top:1585px">Premeches o botón con borde!</div>
<div class="cons" style="top:1619px">Premeches o botón con icona!</div>

<!-- ============ CHROME WINDOW ============ -->
<div class="abs" style="left:1206px;top:218px;width:1100px;height:1010px;border-radius:21px;background:#fdf7fe;overflow:hidden;box-shadow:0 0 0 1px #0c0c0c, 0 0 6px rgba(0,0,0,0.4), 0 20px 60px rgba(0,0,0,0.4)"><div class="abs" style="left:-1px;top:0;width:1100px;height:1010px">
  <div class="abs" style="left:0;top:0;width:1100px;height:100px;background:#dbe2f9"></div>
  <div class="abs" style="left:0;top:80px;width:1100px;height:94px;background:#ffffff;border-bottom:2px solid #d9d9d9;box-sizing:border-box;border-radius:14px 0 0 0"></div>
  <!-- traffic -->
  <div class="abs" style="left:43px;top:29px;width:24px;height:24px;border-radius:50%;background:#e0705b;box-shadow:inset 0 0 0 1px rgba(0,0,0,0.12)"></div>
  <div class="abs" style="left:83px;top:29px;width:24px;height:24px;border-radius:50%;background:#e9c050;box-shadow:inset 0 0 0 1px rgba(0,0,0,0.12)"></div>
  <div class="abs" style="left:123px;top:29px;width:24px;height:24px;border-radius:50%;background:#79c252;box-shadow:inset 0 0 0 1px rgba(0,0,0,0.12)"></div>
  <!-- tab -->
  <div class="abs" style="left:185px;top:12px;width:464px;height:80px;background:#fff;border-radius:20px 20px 0 0"></div>
  <div class="abs" style="left:165px;top:60px;width:20px;height:20px;background:radial-gradient(circle at 0 0, #dbe2f9 20px, #fff 20.5px)"></div>
  <div class="abs" style="left:649px;top:60px;width:20px;height:20px;background:radial-gradient(circle at 100% 0, #dbe2f9 20px, #fff 20.5px)"></div>
  <svg class="abs" style="left:205px;top:28px" width="24" height="24" viewBox="0 0 24 24">
    <path d="M12 1 L3 10 L6 13 L18 1 Z" fill="#8ec5f5"/><path d="M12 11 L6 17 L12 23 L18 23 L12 17 L18 11 Z" fill="#5aaef0"/><path d="M9 20 L12 23 L18 23 L15 20 Z" fill="#0b3c8c"/>
  </svg>
  <div class="abs" style="left:250px;top:24px;font-size:24px;line-height:32px;letter-spacing:0.55px;color:#202124">App Botóns</div>
  <svg class="abs" style="left:605px;top:30px" width="22" height="22" viewBox="0 0 22 22"><path d="M4 4 L18 18 M18 4 L4 18" stroke="#303030" stroke-width="2.6"/></svg>
  <svg class="abs" style="left:677px;top:28px" width="24" height="24" viewBox="0 0 24 24"><path d="M12 2 L12 22 M2 12 L22 12" stroke="#303030" stroke-width="2.6"/></svg>
  <!-- nav -->
  <svg class="abs" style="left:30px;top:112px" width="30" height="30" viewBox="0 0 30 30"><path d="M27 15 L5 15 M14 5 L4 15 L14 25" fill="none" stroke="#454545" stroke-width="2.6"/></svg>
  <svg class="abs" style="left:102px;top:112px" width="30" height="30" viewBox="0 0 30 30"><path d="M3 15 L25 15 M16 5 L26 15 L16 25" fill="none" stroke="#a5a5a5" stroke-width="2.6"/></svg>
  <svg class="abs" style="left:175px;top:112px" width="30" height="30" viewBox="0 0 30 30"><path d="M22.5 10.5 A10.2 10.2 0 1 0 24.2 17" fill="none" stroke="#454545" stroke-width="2.7"/><path d="M15.5 10 L24 10 L24 2" fill="none" stroke="#454545" stroke-width="2.7"/></svg>
  <div class="abs" style="left:241px;top:92px;width:900px;height:67px;border-radius:34px;background:#edf0f9"></div>
  <div class="abs" style="left:251px;top:102px;width:48px;height:48px;border-radius:50%;background:#fff"></div>
  <svg class="abs" style="left:262px;top:113px" width="26" height="26" viewBox="0 0 26 26"><circle cx="13" cy="13" r="11" fill="none" stroke="#1f1f1f" stroke-width="2.6"/><rect x="11.7" y="11" width="2.6" height="8" fill="#1f1f1f"/><rect x="11.7" y="6.5" width="2.6" height="2.6" fill="#1f1f1f"/></svg>
  <div class="abs" style="left:316px;top:106px;font-size:28px;line-height:40px;letter-spacing:1.2px;color:#1f1f1f">localhost<span style="color:#474747">:62696</span></div>
  <!-- content -->
  <div class="abs" style="left:366px;top:200.5px;font-size:44px;line-height:56px;letter-spacing:-0.25px;color:#1d1b20">Exemplo de Botóns en Flutter</div>
  <div class="abs" style="left:513px;top:424px;width:277px;height:64px;border-radius:32px;background:#f4f1f7;box-shadow:0 1.5px 2px rgba(0,0,0,0.3)"></div>
  <div class="abs" style="left:513px;top:435.5px;width:277px;text-align:center;font-size:28px;line-height:44px;color:#6150a2">Botón Elevado</div>
  <div class="abs" style="left:513px;top:538.5px;width:277px;text-align:center;font-size:28px;line-height:44px;color:#6150a2">Botón Plano</div>
  <div class="abs" style="left:495px;top:632px;width:314px;height:64px;box-sizing:border-box;border-radius:32px;border:2px solid #77737c"></div>
  <div class="abs" style="left:495px;top:642.5px;width:314px;text-align:center;font-size:28px;line-height:44px;letter-spacing:0.3px;color:#6150a2">Botón Delimitado</div>
  <svg class="abs" style="left:630px;top:762px" width="44" height="44" viewBox="0 0 44 44"><path d="M22 3 L22 41 M3 22 L41 22" stroke="#76ab5a" stroke-width="5.6"/></svg>
</div></div>

<!-- ============ ANNOTATIONS ============ -->
<svg class="abs" style="left:0;top:0" width="2222" height="1656" viewBox="0 0 2222 1656">
  <defs><filter id="sh" x="-5%" y="-5%" width="110%" height="110%"><feDropShadow dx="0" dy="2" stdDeviation="2" flood-color="#000" flood-opacity="0.22"/></filter></defs>
  <g fill="none" stroke="#d6566f" stroke-width="6" stroke-linecap="round" stroke-linejoin="round" filter="url(#sh)">
    <rect x="267" y="757" width="698" height="326" rx="2"/>
    <path d="M968 924 L1824 995"/>
    <path d="M1810 981 L1825 996 L1808 1008"/>
    <path d="M267 869 C261.0 867.2 243.9 855.9 231 858.5 C218.1 861.1 201.2 871.1 189.5 884.5 C177.8 897.9 167.6 919.8 160.6 939 C153.6 958.2 151.5 975.3 147.5 1000 C143.5 1024.7 139.3 1058.0 136.5 1087 C133.7 1116.0 131.8 1145.0 130.5 1174 C129.2 1203.0 129.1 1230.0 129 1261 C128.9 1292.0 128.9 1319.7 130 1360 C131.1 1400.3 133.5 1458.8 135.5 1503 C137.5 1547.2 140.9 1604.7 142 1625"/>
    <path d="M127 1611 L142 1626 L156 1610"/>
  </g>
</svg>
</body></html>
